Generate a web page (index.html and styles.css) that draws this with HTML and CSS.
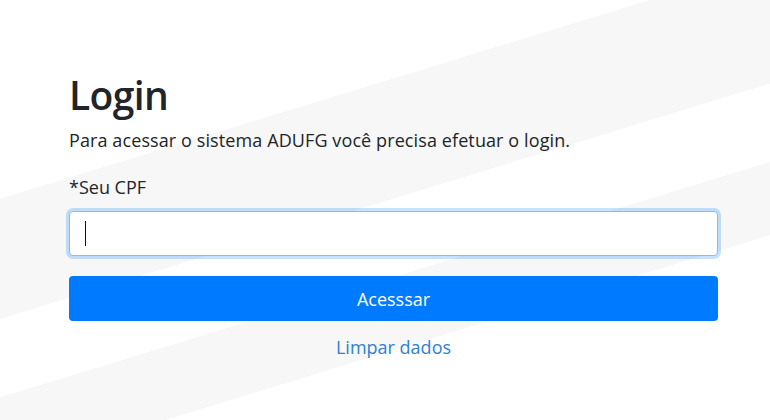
FILE: index.html
```html
<!DOCTYPE html>
<html lang="pt-BR">

<head>
    <meta charset="UTF-8">
    <meta name="viewport" content="width=device-width, initial-scale=1.0">
    <title>Login - ADUFG</title>
    <link rel="stylesheet" href="styles.css">
</head>

<body>
    <div class="login">
        <h1 class="title">Login</h1>
        <p class="lead">Para acessar o sistema ADUFG você precisa efetuar o login.</p>

        <form class="form">
            <label class="label" for="cpf">*Seu CPF</label>
            <div class="field">
                <input class="input" type="text" id="cpf" name="cpf">
                <span class="caret"></span>
            </div>
            <button class="btn" type="button">Acesssar</button>
            <a class="clear" href="#">Limpar dados</a>
        </form>
    </div>
</body>

</html>
```

FILE: styles.css
```css
html
{
    height: 100%;
    background: linear-gradient(163deg,
        #ffffff 0 190px,
        #f7f7f7 190px 305px,
        #ffffff 305px 380px,
        #f7f7f7 380px 450px,
        #ffffff 450px);
}

body
{
    margin: 0;
    font-family: "Open Sans", "Noto Sans", sans-serif;
    color: #212529;
}

.login
{
    width: 649px;
    padding: 72px 0 0 69px;
}

.title
{
    margin: 0;
    font-size: 39px;
    font-weight: 600;
    line-height: 46px;
    letter-spacing: -0.6px;
}

.lead
{
    margin: 9px 0 0;
    font-size: 18px;
    line-height: 26px;
    letter-spacing: 0.1px;
}

.form
{
    display: flex;
    flex-direction: column;
    margin-top: 21px;
}

.label
{
    font-size: 18px;
    line-height: 26px;
}

.field
{
    position: relative;
    margin-top: 11px;
}

.input
{
    display: block;
    box-sizing: border-box;
    width: 100%;
    height: 45px;
    padding: 0 16px;
    border: 1px solid #86bdf3;
    border-radius: 4px;
    background: #fff;
    box-shadow: 0 0 0 3px rgba(0, 123, 255, 0.22);
    font-family: inherit;
    font-size: 18px;
    outline: none;
}

.caret
{
    position: absolute;
    left: 16px;
    top: 10px;
    width: 1px;
    height: 25px;
    background: #111;
}

.btn
{
    height: 45px;
    margin-top: 20px;
    border: 0;
    border-radius: 4px;
    background-color: #007bff;
    color: #fff;
    font-family: inherit;
    font-size: 18px;
}

.clear
{
    align-self: center;
    margin-top: 13px;
    color: #2f7fd2;
    font-size: 18px;
    line-height: 26px;
    text-decoration: none;
}
```
